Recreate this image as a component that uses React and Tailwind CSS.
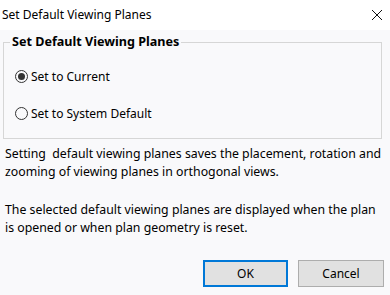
export default function App() {
    const font = { fontFamily: '"Noto Sans", "Open Sans", sans-serif' };

    return (
        <div className="w-[390px] h-[295px] bg-[#f9f9fb] text-black overflow-hidden" style={font}>
            <div className="h-[30px] bg-white flex items-center justify-between pl-[2px] pr-[4px]">
                <span className="text-[12px] leading-none">Set Default Viewing Planes</span>
                <svg width="12" height="12" viewBox="0 0 12 12" className="mr-[3px]">
                    <path d="M1 1 L11 11 M11 1 L1 11" stroke="#111" strokeWidth="1" />
                </svg>
            </div>

            <fieldset className="ml-[3px] mr-[8px] mt-[4px] h-[105px] border border-[#d6d6d6]">
                <legend className="ml-[6px] px-[2px] text-[12.6px] font-bold leading-[16px]">Set Default Viewing Planes</legend>
                <div className="flex flex-col gap-[22px] pt-[19px] pl-[11px]">
                    <label className="flex items-center gap-[3px] text-[12px] leading-[15px]">
                        <span className="w-[13px] h-[13px] rounded-full border border-[#333] flex items-center justify-center">
                            <span className="w-[7px] h-[7px] rounded-full bg-[#333]" />
                        </span>
                        Set to Current
                    </label>
                    <label className="flex items-center gap-[3px] text-[12px] leading-[15px]">
                        <span className="w-[13px] h-[13px] rounded-full border border-[#333]" />
                        Set to System Default
                    </label>
                </div>
            </fieldset>

            <div className="px-[5px] pt-[6px] text-[12.3px] leading-[18px] whitespace-pre">
                <p>Setting  default viewing planes saves the placement, rotation and<br />zooming of viewing planes in orthogonal views.</p>
                <p className="mt-[20px]">The selected default viewing planes are displayed when the plan<br />is opened or when plan geometry is reset.</p>
            </div>

            <div className="flex justify-end gap-[10px] pr-[6px] mt-[23px]">
                <button className="w-[85px] h-[27px] bg-[#e1e1e1] border-2 border-[#0078d7] text-[12px]">OK</button>
                <button className="w-[86px] h-[27px] bg-[#e1e1e1] border border-[#adadad] text-[12px]">Cancel</button>
            </div>
        </div>
    );
}
